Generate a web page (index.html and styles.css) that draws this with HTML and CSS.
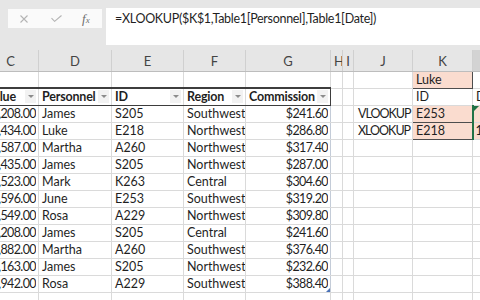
FILE: index.html
```html
<!DOCTYPE html>
<html lang="en">

<head>
    <meta charset="UTF-8">
    <meta name="viewport" content="width=device-width, initial-scale=1.0">
    <title>XLOOKUP</title>
    <link rel="stylesheet" href="styles.css">
</head>

<body>

    <div class="formula-bar">
        <div class="fx-tools">
            <svg class="cancel" width="8" height="8" viewBox="0 0 8 8">
                <path d="M0.5 0.5 L7.5 7.5 M7.5 0.5 L0.5 7.5" stroke="#b4b4b4" stroke-width="1.1" fill="none" />
            </svg>
            <svg class="enter" width="11" height="7" viewBox="0 0 11 7">
                <path d="M0.5 3.2 L3.6 6.3 L10.5 0.5" stroke="#b4b4b4" stroke-width="1.1" fill="none" />
            </svg>
            <span class="fx">f<small>x</small></span>
        </div>
        <div class="formula">=XLOOKUP($K$1,Table1[Personnel],Table1[Date])</div>
    </div>

    <div class="grid-view">
        <table class="sheet">
            <colgroup>
                <col class="c-c">
                <col class="c-d">
                <col class="c-e">
                <col class="c-f">
                <col class="c-g">
                <col class="c-h">
                <col class="c-i">
                <col class="c-j">
                <col class="c-k">
                <col class="c-l">
            </colgroup>
            <tr class="col-heads">
                <th>C</th><th>D</th><th>E</th><th>F</th><th>G</th><th>H</th><th>I</th><th>J</th><th>K</th><th class="sel"></th>
            </tr>
            <tr>
                <td></td><td></td><td></td><td></td><td></td><td></td><td></td><td></td><td class="pick">Luke</td><td></td>
            </tr>
            <tr>
                <td class="th"><div class="head"><span>Value</span><i class="drop"></i></div></td>
                <td class="th"><div class="head"><span>Personnel</span><i class="drop"></i></div></td>
                <td class="th"><div class="head"><span>ID</span><i class="drop"></i></div></td>
                <td class="th"><div class="head"><span>Region</span><i class="drop"></i></div></td>
                <td class="th last"><div class="head"><span>Commission</span><i class="drop"></i></div></td>
                <td></td><td></td><td></td><td>ID</td><td>D</td>
            </tr>
            <tr>
                <td class="num"><div>$1,208.00</div></td><td>James</td><td>S205</td><td>Southwest</td><td class="num edge"><div>$241.60</div></td>
                <td></td><td></td><td class="label">VLOOKUP</td><td class="pick">E253</td><td class="sel-cell flag"></td>
            </tr>
            <tr>
                <td class="num"><div>$1,434.00</div></td><td>Luke</td><td>E218</td><td>Northwest</td><td class="num edge"><div>$286.80</div></td>
                <td></td><td></td><td class="label">XLOOKUP</td><td class="pick">E218</td><td class="sel-cell">1/15/2020</td>
            </tr>
            <tr>
                <td class="num"><div>$1,587.00</div></td><td>Martha</td><td>A260</td><td>Northwest</td><td class="num edge"><div>$317.40</div></td>
                <td></td><td></td><td></td><td></td><td></td>
            </tr>
            <tr>
                <td class="num"><div>$1,435.00</div></td><td>James</td><td>S205</td><td>Northwest</td><td class="num edge"><div>$287.00</div></td>
                <td></td><td></td><td></td><td></td><td></td>
            </tr>
            <tr>
                <td class="num"><div>$1,523.00</div></td><td>Mark</td><td>K263</td><td>Central</td><td class="num edge"><div>$304.60</div></td>
                <td></td><td></td><td></td><td></td><td></td>
            </tr>
            <tr>
                <td class="num"><div>$1,596.00</div></td><td>June</td><td>E253</td><td>Southwest</td><td class="num edge"><div>$319.20</div></td>
                <td></td><td></td><td></td><td></td><td></td>
            </tr>
            <tr>
                <td class="num"><div>$1,549.00</div></td><td>Rosa</td><td>A229</td><td>Northwest</td><td class="num edge"><div>$309.80</div></td>
                <td></td><td></td><td></td><td></td><td></td>
            </tr>
            <tr>
                <td class="num"><div>$1,208.00</div></td><td>James</td><td>S205</td><td>Central</td><td class="num edge"><div>$241.60</div></td>
                <td></td><td></td><td></td><td></td><td></td>
            </tr>
            <tr>
                <td class="num"><div>$1,882.00</div></td><td>Martha</td><td>A260</td><td>Southwest</td><td class="num edge"><div>$376.40</div></td>
                <td></td><td></td><td></td><td></td><td></td>
            </tr>
            <tr>
                <td class="num"><div>$1,163.00</div></td><td>James</td><td>S205</td><td>Northwest</td><td class="num edge"><div>$232.60</div></td>
                <td></td><td></td><td></td><td></td><td></td>
            </tr>
            <tr>
                <td class="num"><div>$1,942.00</div></td><td>Rosa</td><td>A229</td><td>Southwest</td><td class="num edge resize"><div>$388.40</div></td>
                <td></td><td></td><td></td><td></td><td></td>
            </tr>
            <tr>
                <td></td><td></td><td></td><td></td><td></td><td></td><td></td><td></td><td></td><td></td>
            </tr>
        </table>
    </div>

</body>

</html>
```

FILE: styles.css
```css
* {
    margin: 0px;
    box-sizing: border-box;
}

body {
    width: 480px;
    height: 300px;
    overflow: hidden;
    background-color: #ffffff;
    font-family: Lato, "Liberation Sans", sans-serif;
    font-size: 12.5px;
    color: #1f1f1f;
}

/* formula bar */
.formula-bar {
    height: 50px;
    padding-top: 8px;
    display: flex;
    align-items: flex-start;
    background-color: #e6e6e6;
}

.fx-tools {
    width: 94px;
    height: 19px;
    margin-left: 8px;
    margin-top: 1px;
    padding-left: 12px;
    display: flex;
    align-items: center;
    background-color: #fafafa;
}

.fx-tools .enter {
    margin-left: 23px;
}

.fx {
    margin-left: 20px;
    font-family: "Liberation Serif", serif;
    font-style: italic;
    font-size: 13px;
    color: #6e6e6e;
}

.fx small {
    font-size: 9px;
}

.formula {
    flex: 1;
    height: 37px;
    margin-left: 4px;
    padding: 2px 9px;
    line-height: 17px;
    letter-spacing: -0.3px;
    background-color: #ffffff;
}

/* sheet grid, scrolled so column C is half hidden */
.grid-view {
    width: 480px;
    overflow: hidden;
}

.sheet {
    width: 498px;
    margin-left: -18px;
    table-layout: fixed;
    border-collapse: collapse;
}

.c-c { width: 56px; }
.c-d { width: 73px; }
.c-e { width: 72px; }
.c-f { width: 62px; }
.c-g { width: 85px; }
.c-h { width: 12px; }
.c-i { width: 11px; }
.c-j { width: 59px; }
.c-k { width: 60px; }
.c-l { width: 8px; }

.sheet td,
.sheet th {
    height: 17px;
    padding: 0px 3px;
    border: 1px solid #dadada;
    white-space: nowrap;
    overflow: hidden;
    text-align: left;
    font-weight: normal;
}

.col-heads th {
    height: 21px;
    padding-top: 2px;
    text-align: center;
    font-size: 13px;
    color: #444444;
    background-color: #e6e6e6;
    border-top: none;
    border-color: #d0d0d0;
    border-bottom-color: #bdbdbd;
}

.col-heads th.sel {
    background-color: #d3d3d3;
}

/* table header row */
.sheet td.th {
    font-weight: bold;
    border-top: 2px solid #3d3d3d;
    border-bottom: 1px solid #3d3d3d;
    padding-right: 2px;
}

.sheet td.last {
    border-right: 1px solid #3d3d3d;
}

.head {
    display: flex;
    align-items: center;
    justify-content: space-between;
    overflow: hidden;
}

.head span {
    flex-shrink: 0;
    letter-spacing: -0.2px;
}

.drop {
    width: 11px;
    height: 13px;
    flex-shrink: 0;
    display: flex;
    align-items: center;
    justify-content: center;
    background-color: #f2f2f2;
}

.drop::after {
    content: "";
    border-left: 3px solid transparent;
    border-right: 3px solid transparent;
    border-top: 3px solid #8c8c8c;
}

.sheet td.num {
    padding-right: 2px;
    letter-spacing: -0.6px;
}

.num div {
    display: flex;
    justify-content: flex-end;
    overflow: hidden;
}

.sheet td.edge {
    border-right: 1px solid #c4ccd8;
}

.resize {
    position: relative;
}

.resize::after {
    content: "";
    position: absolute;
    right: 0px;
    bottom: 0px;
    border-left: 4px solid transparent;
    border-bottom: 4px solid #4a72b8;
}

.sheet td.label {
    padding-left: 4px;
    letter-spacing: -1px;
}

/* lookup cells */
.sheet td.pick {
    background-color: #fadccf;
    border: 1px solid #4d4d4d;
}

.sheet td.sel-cell {
    background-color: #fadccf;
    border-left: 2px solid #217346;
    padding-left: 2px;
}

.flag {
    position: relative;
}

.flag::before {
    content: "";
    position: absolute;
    left: 0px;
    top: 0px;
    border-right: 5px solid transparent;
    border-top: 5px solid #1e7145;
}
```
